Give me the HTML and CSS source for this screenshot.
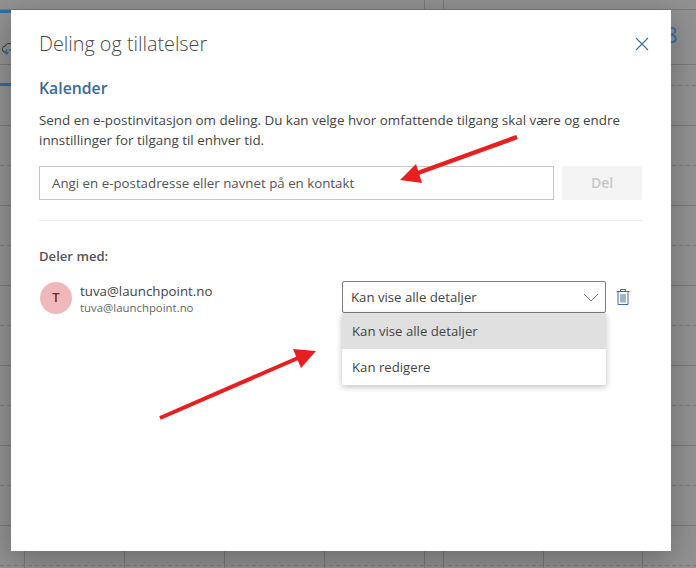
FILE: index.html
```html
<!DOCTYPE html>
<html lang="no">
<head>
<meta charset="utf-8">
<title>Deling og tillatelser</title>
<link rel="stylesheet" href="styles.css">
</head>
<body>
<div class="backdrop">
  <svg class="bg-grid" width="696" height="568" viewBox="0 0 696 568" fill="none">
    <g stroke="#797979" stroke-width="1">
      <path d="M0 9.500H696M0 64.500H696M0 125.500H696M0 205.500H696M0 285.500H696M0 365.500H696M0 445.500H696M0 525.500H696"/>
      <path d="M24.500 551V568M124.500 551V568M224.500 551V568M324.500 551V568M424.500 0V568M443.500 0V568M543.500 551V568M642.500 551V568"/>
    </g>
    <g stroke="#7d7d7d" stroke-width="1" stroke-dasharray="4 3">
      <path d="M671 85.500H696M0 165.500H696M0 245.500H696M0 325.500H696M0 405.500H696M0 485.500H696M0 565.500H696"/>
    </g>
    <path d="M0 11.500H11M0 84.500H11" stroke="#2f6ea5" stroke-width="3"/>
    <path d="M11 44C8 42.500 6 44 5.500 46C3 46 2 48 2.500 50C3 52 4.500 52 6 52" stroke="#333" stroke-width="1"/>
    <path d="M6.500 49v5M4.500 52l2 2 2-2M9 50h2" stroke="#2f6ea5" stroke-width="1.300"/>
  </svg>
  <span class="bg-digit">8</span>
  <main class="modal">
    <header class="modal-head">
      <h1 class="modal-title">Deling og tillatelser</h1>
      <svg class="close" width="14" height="14" viewBox="0 0 14 14" fill="none"><path d="M1 1l12 12M13 1L1 13" stroke="#3e6d99" stroke-width="1.100"/></svg>
    </header>
    <h2 class="section-title">Kalender</h2>
    <p class="intro">Send en e-postinvitasjon om deling. Du kan velge hvor omfattende tilgang skal være og endre innstillinger for tilgang til enhver tid.</p>
    <div class="invite">
      <div class="invite-input">Angi en e-postadresse eller navnet på en kontakt</div>
      <div class="invite-btn">Del</div>
    </div>
    <hr class="divider">
    <div class="shared-label">Deler med:</div>
    <div class="person">
      <div class="avatar">T</div>
      <div class="person-text">
        <div class="person-name">tuva@launchpoint.no</div>
        <div class="person-mail">tuva@launchpoint.no</div>
      </div>
      <div class="perm">
        <div class="select">
          <span>Kan vise alle detaljer</span>
          <svg width="16" height="9" viewBox="0 0 16 9" fill="none"><path d="M1 1l7 7 7-7" stroke="#7a7a7a" stroke-width="1"/></svg>
        </div>
        <ul class="menu">
          <li class="menu-item menu-item-on">Kan vise alle detaljer</li>
          <li class="menu-item">Kan redigere</li>
        </ul>
      </div>
      <svg class="trash" width="14" height="18" viewBox="0 0 14 18" fill="none" stroke="#3e6d99" stroke-width="1"><path d="M0.500 3.500h13M4.500 3V1.500h5V3M2 3.500v13h10v-13M5 6v8.500M7 6v8.500M9 6v8.500"/></svg>
    </div>
  </main>
  <svg class="arrows" width="696" height="568" viewBox="0 0 696 568">
    <path d="M517 137L415 174" stroke="#e81f1f" stroke-width="4.500"/>
    <path d="M400 180L416 164L422 183Z" fill="#e81f1f"/>
    <path d="M160 418L298 358" stroke="#e81f1f" stroke-width="4"/>
    <path d="M316 351L293 349L301 368Z" fill="#e81f1f"/>
  </svg>
</div>
</body>
</html>
```
FILE: styles.css
```css
* { box-sizing: border-box; }
html, body { margin: 0; padding: 0; }
body { width: 696px; height: 568px; overflow: hidden; font-family: "Open Sans", "Noto Sans", sans-serif; }
.backdrop {
  position: relative;
  width: 696px;
  height: 568px;
  padding: 10px 25px 17px 11px;
  background: #919191;
  overflow: hidden;
}
.bg-grid { position: absolute; left: 0; top: 0; }
.bg-digit { position: absolute; left: 665px; top: 23px; font-size: 22px; line-height: 22px; color: #2f6ea5; }
.modal {
  position: relative;
  width: 660px;
  height: 541px;
  padding: 20px 29px 0 28px;
  background: #fff;
  box-shadow: 0 8px 30px rgba(0, 0, 0, 0.28);
}
.modal-head { display: flex; justify-content: space-between; align-items: center; height: 28px; }
.modal-title { margin: 0; font-size: 19.800px; font-weight: 300; line-height: 28px; color: #4a4a4a; }
.close { margin-right: -7px; }
.section-title { margin: 19px 0 0; font-size: 15.800px; font-weight: 600; line-height: 22px; color: #3a6a96; }
.intro { margin: 11px 0 0; font-size: 13.400px; line-height: 20px; color: #444; }
.invite { display: flex; gap: 8px; margin-top: 16px; }
.invite-input {
  flex: 1;
  height: 34px;
  padding-left: 12px;
  border: 1px solid #c8c8c8;
  font-size: 13.300px;
  line-height: 32px;
  color: #555;
}
.invite-btn {
  width: 80px;
  height: 34px;
  border-radius: 2px;
  background: #f4f4f4;
  color: #c8c8c8;
  font-size: 14px;
  font-weight: 600;
  line-height: 34px;
  text-align: center;
}
.divider { height: 1px; margin: 20px 0 0; border: 0; background: #ededed; }
.shared-label { margin-top: 25px; font-size: 13.100px; font-weight: 600; line-height: 20px; color: #555; }
.person { display: flex; align-items: flex-start; margin-top: 15px; }
.avatar {
  flex: none;
  width: 32px;
  height: 32px;
  margin: 1px 8px 0 1px;
  border-radius: 50%;
  background: #efb9b9;
  color: #7a2626;
  font-size: 13px;
  font-weight: 600;
  line-height: 31px;
  text-align: center;
}
.person-text { width: 262px; padding-top: 1px; }
.person-name { font-size: 13.300px; line-height: 18px; color: #444; }
.person-mail { font-size: 11.400px; line-height: 16px; color: #666; }
.perm { position: relative; width: 264px; }
.select {
  display: flex;
  justify-content: space-between;
  align-items: center;
  height: 32px;
  padding: 0 6px 0 8px;
  border: 1px solid #7e7e7e;
  border-radius: 2px;
  font-size: 13.200px;
  color: #444;
}
.menu {
  position: absolute;
  top: 32px;
  left: 0;
  width: 264px;
  margin: 0;
  padding: 0;
  list-style: none;
  background: #fff;
  border-radius: 0 0 2px 2px;
  box-shadow: 0 2px 6px rgba(0, 0, 0, 0.25);
}
.menu-item { height: 36px; padding-left: 10px; font-size: 13.200px; line-height: 36px; color: #444; }
.menu-item-on { background: #e0e0e0; }
.trash { margin: 7px 0 0 10px; }
.arrows { position: absolute; left: 0; top: 0; pointer-events: none; }
```
